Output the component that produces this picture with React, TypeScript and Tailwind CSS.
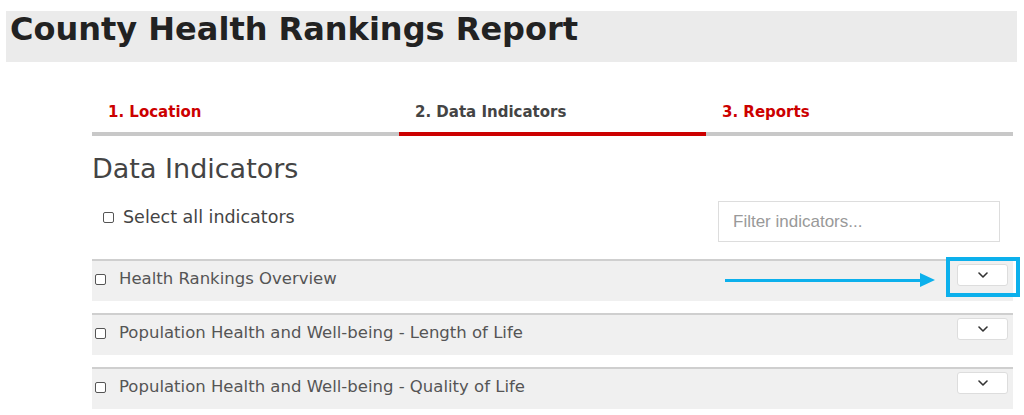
import React from 'react';

const rows = [
  'Health Rankings Overview',
  'Population Health and Well-being - Length of Life',
  'Population Health and Well-being - Quality of Life',
];

const Box = () => (
  <span className="inline-block w-[11px] h-[11px] border border-[#555] rounded-[2px] bg-white shrink-0" />
);

const Chevron = () => (
  <svg width="10" height="6" viewBox="0 0 10 6" fill="none" stroke="#333" strokeWidth="1.6" strokeLinecap="round" strokeLinejoin="round">
    <path d="M1 1l4 4 4-4" />
  </svg>
);

const App = () => {
  return (
    <div className="w-[1024px] h-[415px] bg-white relative overflow-hidden font-['DejaVu_Sans',sans-serif]">
      {/* page title */}
      <div className="pt-[11px] pl-[6px]">
        <div className="w-[1011px] h-[51px] bg-[#ebebeb] pl-[4px]">
          <h1 className="text-[32px] leading-[36px] font-bold text-[#222]">County Health Rankings Report</h1>
        </div>
      </div>

      <div className="ml-[92px] w-[921px]">
        {/* steps */}
        <div className="grid grid-cols-3 mt-[37px]">
          <div className="border-b-4 border-[#c8c8c8] px-4 h-[37px] text-[15px] font-bold text-[#cc0000] leading-[27px]">1. Location</div>
          <div className="border-b-4 border-[#cc0000] px-4 h-[37px] text-[15px] font-bold text-[#444] leading-[27px]">2. Data Indicators</div>
          <div className="border-b-4 border-[#c8c8c8] px-4 h-[37px] text-[15px] font-bold text-[#cc0000] leading-[27px]">3. Reports</div>
        </div>

        <h2 className="mt-[16px] text-[27px] leading-[34px] font-normal text-[#444]">Data Indicators</h2>

        <div className="flex items-start justify-between mt-[15px] pr-[13px]">
          <label className="flex items-center gap-[9px] pl-[11px] pt-[3px] text-[17.5px] text-[#444]">
            <Box />
            Select all indicators
          </label>
          <input
            placeholder="Filter indicators..."
            className="w-[282px] h-[41px] border border-[#ddd] px-[14px] text-[17px] font-['Liberation_Sans',sans-serif] placeholder:text-[#999] outline-none"
          />
        </div>

        <div className="mt-[17px] flex flex-col gap-[12px]">
          {rows.map((r) => (
            <div key={r} className="h-[42px] bg-[#f0f0f0] border-t-2 border-[#cfcfcf] flex items-start justify-between pl-[3px] pr-[5px]">
              <label className="flex items-center gap-[13px] pt-[6px] text-[16.5px] text-[#555]">
                <Box />
                {r}
              </label>
              <button className="mt-[3px] w-[51px] h-[22px] bg-white border border-[#ddd] rounded-[3px] flex items-center justify-center">
                <Chevron />
              </button>
            </div>
          ))}
        </div>
      </div>

      {/* annotation */}
      <div className="absolute left-[725px] top-[273px] flex items-center">
        <div className="w-[195px] h-[3px] bg-[#0cb0ec]" />
        <svg width="15" height="14" viewBox="0 0 15 14"><path d="M0 0L15 7L0 14Z" fill="#0cb0ec" /></svg>
      </div>
      <div className="absolute left-[946px] top-[257px] w-[74px] h-[40px] border-4 border-[#0cb0ec]" />
    </div>
  );
};

export default App;
